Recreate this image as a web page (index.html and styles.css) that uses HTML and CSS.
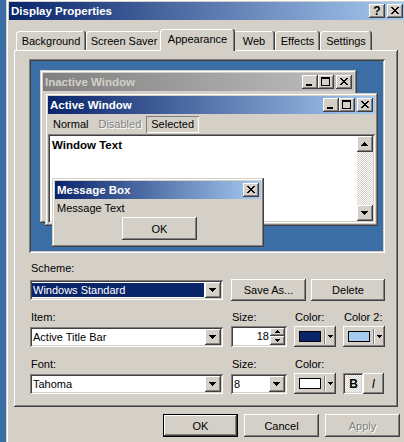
FILE: index.html
```html
<!DOCTYPE html>
<html lang="en">
<head>
  <meta charset="UTF-8">
  <title>Display Properties</title>
  <link rel="stylesheet" href="styles.css">
</head>
<body>

  <div class="dialog">
    <div class="titlebar">
      <span class="caption">Display Properties</span>
      <span class="cap-btn help">?</span>
      <span class="cap-btn">
        <svg width="16" height="14"><path d="M4 3h2v1H4zM10 3h2v1h-2zM5 4h2v1H5zM9 4h2v1H9zM6 5h4v1H6zM7 6h2v1H7zM6 7h4v1H6zM5 8h2v1H5zM9 8h2v1H9zM4 9h2v1H4zM10 9h2v1h-2z"/></svg>
      </span>
    </div>

    <div class="content">
      <div class="tabs">
        <div class="tab tab-background">Background</div>
        <div class="tab tab-saver">Screen Saver</div>
        <div class="tab tab-appearance selected">Appearance</div>
        <div class="tab tab-web">Web</div>
        <div class="tab tab-effects">Effects</div>
        <div class="tab tab-settings">Settings</div>
      </div>

      <div class="panel">
        <!-- sample windows drawn with the current scheme -->
        <div class="preview">
          <div class="win inactive">
            <div class="wtitle">
              <span class="caption">Inactive Window</span>
              <span class="cap-btn"><svg width="16" height="14"><path d="M4 9h6v2H4z"/></svg></span>
              <span class="cap-btn"><svg width="16" height="14"><path fill-rule="evenodd" d="M3 2h9v9H3zM4 4v6h7V4z"/></svg></span>
              <span class="cap-btn close-gap"><svg width="16" height="14"><path d="M4 3h2v1H4zM10 3h2v1h-2zM5 4h2v1H5zM9 4h2v1H9zM6 5h4v1H6zM7 6h2v1H7zM6 7h4v1H6zM5 8h2v1H5zM9 8h2v1H9zM4 9h2v1H4zM10 9h2v1h-2z"/></svg></span>
            </div>
          </div>

          <div class="win active">
            <div class="wtitle">
              <span class="caption">Active Window</span>
              <span class="cap-btn"><svg width="16" height="14"><path d="M4 9h6v2H4z"/></svg></span>
              <span class="cap-btn"><svg width="16" height="14"><path fill-rule="evenodd" d="M3 2h9v9H3zM4 4v6h7V4z"/></svg></span>
              <span class="cap-btn close-gap"><svg width="16" height="14"><path d="M4 3h2v1H4zM10 3h2v1h-2zM5 4h2v1H5zM9 4h2v1H9zM6 5h4v1H6zM7 6h2v1H7zM6 7h4v1H6zM5 8h2v1H5zM9 8h2v1H9zM4 9h2v1H4zM10 9h2v1h-2z"/></svg></span>
            </div>
            <div class="menubar">
              <span>Normal</span>
              <span class="disabled">Disabled</span>
              <span class="sel">Selected</span>
            </div>
            <div class="client">
              <div class="client-text">Window Text</div>
              <div class="scrollbar">
                <span class="scroll-btn"><svg width="16" height="16"><path d="M7 6h1v1H7zM6 7h3v1H6zM5 8h5v1H5zM4 9h7v1H4z"/></svg></span>
                <span class="scroll-btn"><svg width="16" height="16"><path d="M4 6h7v1H4zM5 7h5v1H5zM6 8h3v1H6zM7 9h1v1H7z"/></svg></span>
              </div>
            </div>
          </div>

          <div class="win msgbox">
            <div class="wtitle">
              <span class="caption">Message Box</span>
              <span class="cap-btn"><svg width="16" height="14"><path d="M4 3h2v1H4zM10 3h2v1h-2zM5 4h2v1H5zM9 4h2v1H9zM6 5h4v1H6zM7 6h2v1H7zM6 7h4v1H6zM5 8h2v1H5zM9 8h2v1H9zM4 9h2v1H4zM10 9h2v1h-2z"/></svg></span>
            </div>
            <div class="msg-text">Message Text</div>
            <div class="btn msg-ok">OK</div>
          </div>
        </div>

        <div class="label scheme-label">Scheme:</div>
        <div class="scheme-row">
          <div class="combo scheme-combo">
            <span class="combo-text highlight">Windows Standard</span>
            <span class="drop-btn"><svg width="16" height="16"><path d="M4 6h7v1H4zM5 7h5v1H5zM6 8h3v1H6zM7 9h1v1H7z"/></svg></span>
          </div>
          <div class="btn save-btn">Save As...</div>
          <div class="btn delete-btn">Delete</div>
        </div>

        <div class="fields">
          <div class="label">Item:</div>
          <div class="label">Size:</div>
          <div class="label">Color:</div>
          <div class="label">Color 2:</div>

          <div class="combo wide">
            <span class="combo-text">Active Title Bar</span>
            <span class="drop-btn"><svg width="16" height="16"><path d="M4 6h7v1H4zM5 7h5v1H5zM6 8h3v1H6zM7 9h1v1H7z"/></svg></span>
          </div>
          <div class="spin">
            <span class="spin-text">18</span>
            <span class="updown">
              <span class="ud-btn"><svg width="15" height="8"><path d="M7 2h1v1H7zM6 3h3v1H6zM5 4h5v1H5z"/></svg></span>
              <span class="ud-btn"><svg width="15" height="9"><path d="M5 3h5v1H5zM6 4h3v1H6zM7 5h1v1H7z"/></svg></span>
            </span>
          </div>
          <div class="btn color-btn">
            <span class="swatch navy"></span>
            <span class="sep"></span>
            <svg width="5" height="3"><path d="M0 0h5v1H0zM1 1h3v1H1zM2 2h1v1H2z"/></svg>
          </div>
          <div class="btn color-btn">
            <span class="swatch light"></span>
            <span class="sep"></span>
            <svg width="5" height="3"><path d="M0 0h5v1H0zM1 1h3v1H1zM2 2h1v1H2z"/></svg>
          </div>

          <div class="label">Font:</div>
          <div class="label">Size:</div>
          <div class="label">Color:</div>
          <div></div>

          <div class="combo wide">
            <span class="combo-text">Tahoma</span>
            <span class="drop-btn"><svg width="16" height="16"><path d="M4 6h7v1H4zM5 7h5v1H5zM6 8h3v1H6zM7 9h1v1H7z"/></svg></span>
          </div>
          <div class="combo">
            <span class="combo-text">8</span>
            <span class="drop-btn"><svg width="16" height="16"><path d="M4 6h7v1H4zM5 7h5v1H5zM6 8h3v1H6zM7 9h1v1H7z"/></svg></span>
          </div>
          <div class="btn color-btn">
            <span class="swatch white"></span>
            <span class="sep"></span>
            <svg width="5" height="3"><path d="M0 0h5v1H0zM1 1h3v1H1zM2 2h1v1H2z"/></svg>
          </div>
          <div class="style-btns">
            <div class="btn toggle pressed"><b>B</b></div>
            <div class="btn toggle"><i>I</i></div>
          </div>
        </div>
      </div>

      <div class="buttons">
        <div class="btn default">OK</div>
        <div class="btn">Cancel</div>
        <div class="btn disabled">Apply</div>
      </div>
    </div>
  </div>

</body>
</html>
```

FILE: styles.css
```css
body {
  margin: 0;
  height: 442px;
  overflow: hidden;
  background: #3a6ea5;
  font-family: 'Liberation Sans', Arial, sans-serif;
  font-size: 11px;
  color: #000;
}

svg {
  display: block;
  shape-rendering: crispEdges;
}

/* window frame */
.dialog {
  box-sizing: border-box;
  width: 401px;
  height: 460px;
  margin: -1px 0 0 6px;
  padding: 3px 3px 0;
  background: #d4d0c8;
  box-shadow: inset -1px -1px #404040, inset 1px 1px #d4d0c8, inset -2px -2px #808080, inset 2px 2px #fff;
}

.titlebar {
  display: flex;
  align-items: center;
  height: 18px;
  padding: 0 1px 0 2px;
  background: linear-gradient(to right, #0a246a, #a6caf0);
  color: #fff;
  font-size: 11.5px;
  font-weight: bold;
}

.titlebar .caption {
  flex: 1;
}

.titlebar .help {
  margin-right: 2px;
  color: #000;
  font-size: 12px;
  line-height: 14px;
}

/* raised 3d buttons */
.cap-btn,
.btn,
.drop-btn,
.scroll-btn,
.ud-btn {
  background: #d4d0c8;
  box-shadow: inset -1px -1px #404040, inset 1px 1px #fff, inset -2px -2px #808080, inset 2px 2px #d4d0c8;
}

.cap-btn {
  display: flex;
  align-items: center;
  justify-content: center;
  width: 16px;
  height: 14px;
  flex-shrink: 0;
}

.content {
  padding: 0 6px 0 5px;
}

/* tabs */
.tabs {
  display: flex;
  align-items: flex-end;
  height: 21px;
  margin-top: 9px;
  padding-left: 2px;
}

.tab {
  box-sizing: border-box;
  display: flex;
  align-items: center;
  justify-content: center;
  height: 19px;
  border-radius: 3px 3px 0 0;
  box-shadow: inset -1px 0 #404040, inset 1px 1px #fff, inset -2px 0 #808080;
  white-space: nowrap;
}

.tab-background { width: 70px; }
.tab-saver { width: 76px; }
.tab-appearance { width: 71px; }
.tab-web { width: 42px; }
.tab-effects { width: 45px; }
.tab-settings { width: 52px; }

.tab.selected {
  position: relative;
  z-index: 1;
  width: 75px;
  height: 22px;
  margin: 0 -2px -1px;
  padding-bottom: 2px;
  background: #d4d0c8;
}

.panel {
  box-sizing: border-box;
  height: 357px;
  padding: 9px 13px 0 16px;
  box-shadow: inset -1px -1px #404040, inset 1px 1px #fff, inset -2px -2px #808080;
}

/* preview desktop */
.preview {
  position: relative;
  width: 356px;
  height: 194px;
  margin-left: -1px;
  background: #3a6ea5;
  box-shadow: inset 1px 1px #808080, inset -1px -1px #fff, inset 2px 2px #404040, inset -2px -2px #d4d0c8;
  overflow: hidden;
}

.win {
  position: absolute;
  box-sizing: border-box;
  display: flex;
  flex-direction: column;
  padding: 3px;
  background: #d4d0c8;
  box-shadow: inset -1px -1px #404040, inset 1px 1px #d4d0c8, inset -2px -2px #808080, inset 2px 2px #fff;
}

.win.inactive {
  left: 11px;
  top: 11px;
  width: 317px;
  height: 153px;
}

.win.active {
  left: 16px;
  top: 34px;
  width: 333px;
  height: 133px;
}

.win.msgbox {
  left: 23px;
  top: 119px;
  width: 212px;
  height: 69px;
}

.wtitle {
  display: flex;
  align-items: center;
  flex-shrink: 0;
  height: 18px;
  padding: 0 2px;
  background: linear-gradient(to right, #0a246a, #a6caf0);
  color: #fff;
  font-size: 11.5px;
  font-weight: bold;
}

.wtitle .caption {
  flex: 1;
  white-space: nowrap;
}

.wtitle .close-gap {
  margin-left: 2px;
}

.inactive .wtitle {
  background: linear-gradient(to right, #808080, #c0c0c0);
  color: #d4d0c8;
}

.menubar {
  display: flex;
  align-items: center;
  height: 20px;
  flex-shrink: 0;
}

.menubar span {
  padding: 0 5px;
  line-height: 17px;
}

.menubar .disabled {
  color: #808080;
  text-shadow: 1px 1px #fff;
}

.menubar .sel {
  box-shadow: inset 1px 1px #808080, inset -1px -1px #fff;
}

.client {
  flex: 1;
  display: flex;
  padding: 2px;
  background: #fff;
  box-shadow: inset 1px 1px #808080, inset -1px -1px #fff, inset 2px 2px #404040, inset -2px -2px #d4d0c8;
}

.client-text {
  flex: 1;
  padding: 3px 2px;
  font-size: 11.5px;
  font-weight: bold;
}

.scrollbar {
  display: flex;
  flex-direction: column;
  justify-content: space-between;
  width: 16px;
  background: repeating-conic-gradient(#fff 0 25%, #d4d0c8 0 50%) 0 0 / 2px 2px;
}

.scroll-btn {
  width: 16px;
  height: 16px;
}

.msg-text {
  padding: 3px 2px 0;
  line-height: 13px;
}

.msg-ok {
  width: 71px;
  height: 21px;
  margin: 2px 0 0 67px;
}

/* scheme and item controls */
.label {
  line-height: 13px;
  padding-left: 1px;
  white-space: nowrap;
}

.scheme-label {
  margin-top: 9px;
  margin-bottom: 4px;
}

.scheme-row {
  display: flex;
  align-items: flex-start;
  height: 22px;
}

.combo {
  box-sizing: border-box;
  display: flex;
  align-items: center;
  height: 20px;
  padding: 2px;
  background: #fff;
  box-shadow: inset 1px 1px #808080, inset -1px -1px #fff, inset 2px 2px #404040, inset -2px -2px #d4d0c8;
  align-self: center;
}

.scheme-combo,
.combo.wide {
  width: 193px;
}

.combo-text {
  flex: 1;
  padding-left: 1px;
  line-height: 16px;
  white-space: nowrap;
}

.combo-text.highlight {
  margin: 1px 1px 1px 0;
  line-height: 14px;
  background: #0a246a;
  color: #fff;
}

.drop-btn {
  width: 16px;
  height: 16px;
  flex-shrink: 0;
}

.btn {
  box-sizing: border-box;
  display: flex;
  align-items: center;
  justify-content: center;
  width: 75px;
  height: 23px;
}

.save-btn {
  height: 22px;
  margin-left: 8px;
}

.delete-btn {
  width: 74px;
  height: 22px;
  margin-left: 5px;
}

.fields {
  display: grid;
  grid-template-columns: 194px 56px 42px 42px;
  grid-template-rows: 13px 21px 22px 21px;
  column-gap: 7px;
  row-gap: 2px;
  margin-top: 10px;
}

.fields .label {
  align-self: end;
}

.spin {
  box-sizing: border-box;
  display: flex;
  height: 21px;
  padding: 2px;
  background: #fff;
  box-shadow: inset 1px 1px #808080, inset -1px -1px #fff, inset 2px 2px #404040, inset -2px -2px #d4d0c8;
}

.spin-text {
  flex: 1;
  padding-right: 1px;
  line-height: 17px;
  text-align: right;
}

.updown {
  display: flex;
  flex-direction: column;
  width: 15px;
}

.ud-btn {
  height: 8px;
}

.ud-btn + .ud-btn {
  height: 9px;
}

.color-btn {
  justify-content: flex-start;
  width: 42px;
  height: 21px;
}

.swatch {
  box-sizing: border-box;
  width: 22px;
  height: 11px;
  margin-left: 5px;
  border: 1px solid #000;
}

.swatch.navy { background: #0a246a; }
.swatch.light { background: #a6caf0; }
.swatch.white { background: #fff; }

.sep {
  width: 1px;
  height: 15px;
  margin: 0 2px 0 3px;
  border-left: 1px solid #808080;
  background: #fff;
}

.style-btns {
  display: flex;
}

.toggle {
  width: 21px;
  height: 21px;
  font-size: 12px;
}

.toggle.pressed {
  width: 20px;
  padding: 1px 0 0 1px;
  background: repeating-conic-gradient(#fff 0 25%, #d4d0c8 0 50%) 0 0 / 2px 2px;
  box-shadow: inset 1px 1px #808080, inset -1px -1px #fff, inset 2px 2px #404040, inset -2px -2px #d4d0c8;
}

/* OK / Cancel / Apply */
.buttons {
  display: flex;
  justify-content: flex-end;
  gap: 6px;
  margin: 7px -2px 0 0;
}

.btn.default {
  box-shadow: inset 0 0 0 1px #000, inset -2px -2px #404040, inset 2px 2px #fff, inset -3px -3px #808080;
}

.btn.disabled {
  color: #808080;
  text-shadow: 1px 1px #fff;
}
```
